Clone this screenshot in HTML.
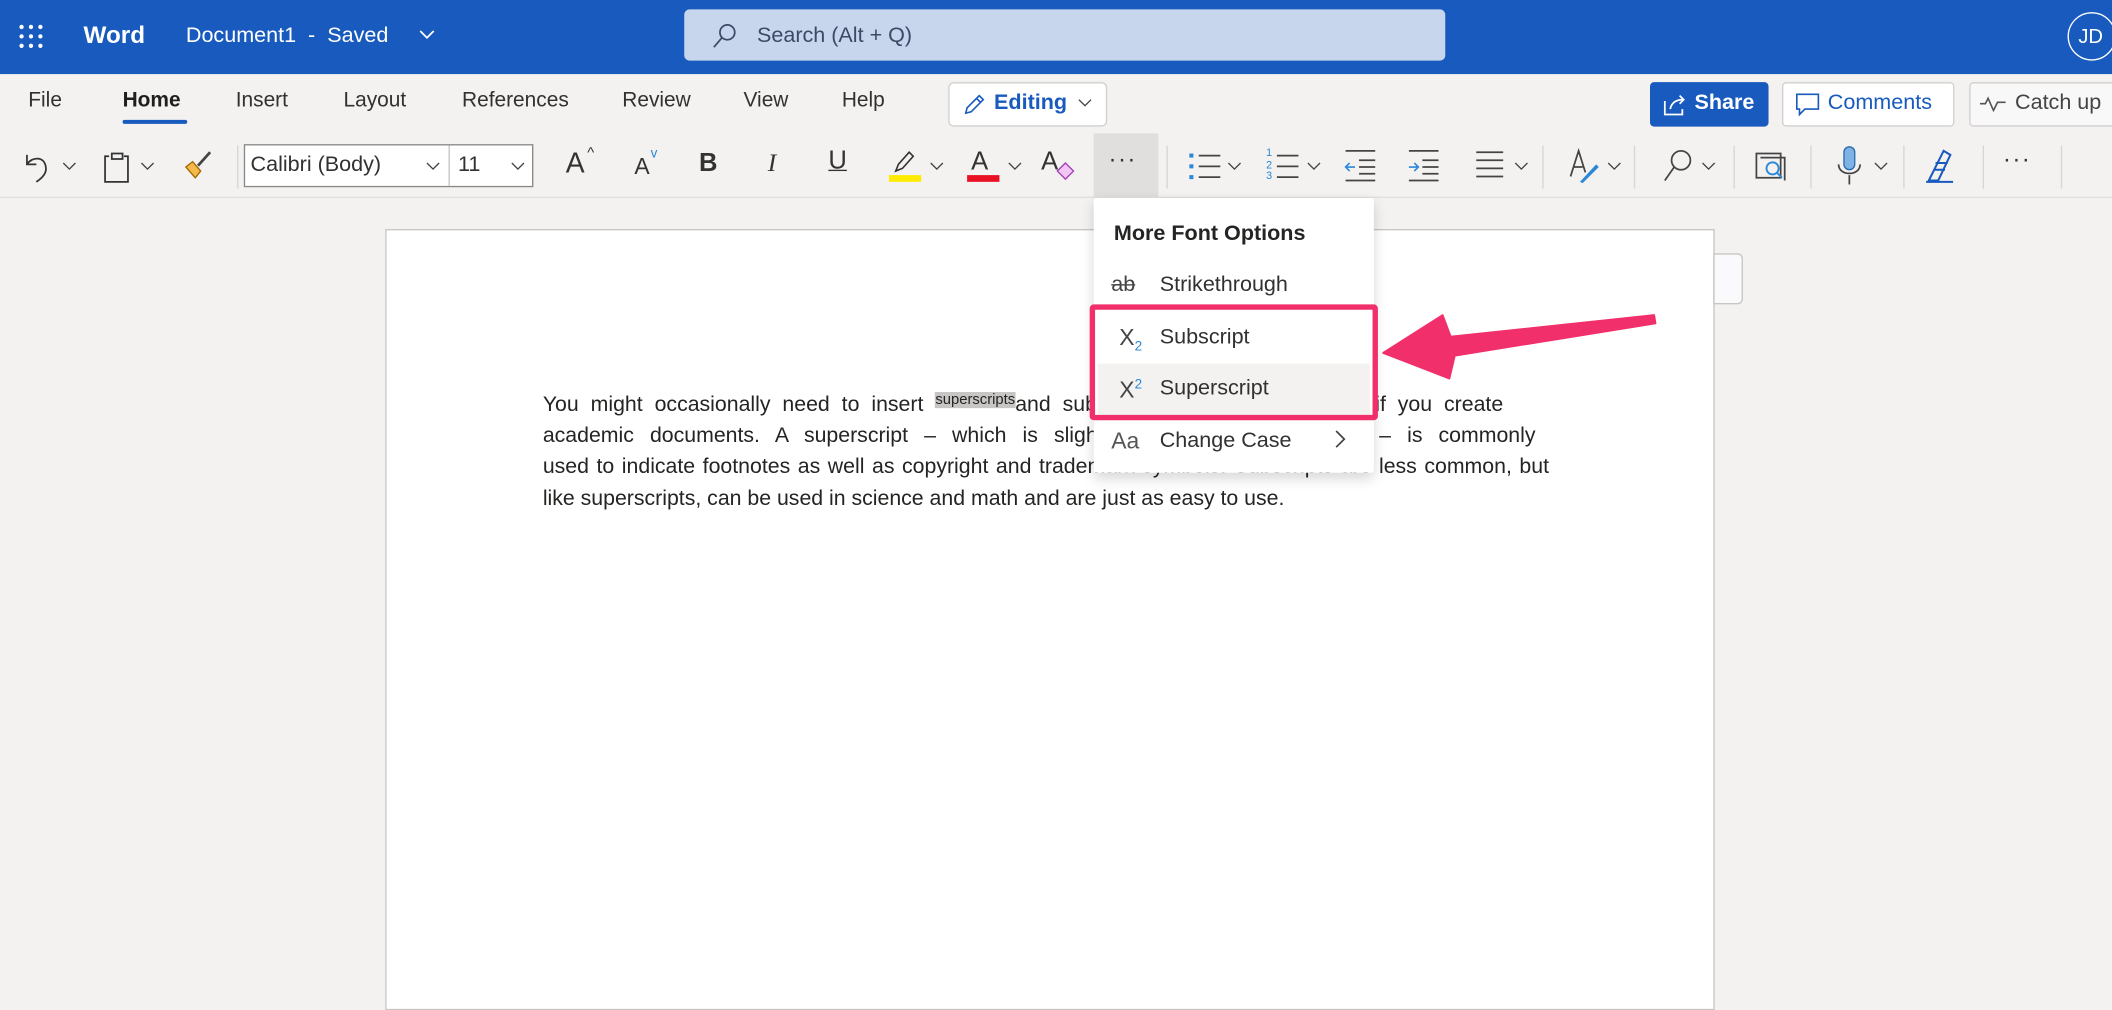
<!DOCTYPE html>
<html><head><meta charset="utf-8"><style>
*{margin:0;padding:0;box-sizing:border-box}
html,body{width:2112px;height:1000px;overflow:hidden;background:#f3f2f1}
#w{position:absolute;left:0;top:0;width:1568px;height:743px;transform:scale(1.34694);transform-origin:0 0;font-family:"Liberation Sans",sans-serif;color:#323130}
.a{position:absolute}
.hdr{left:0;top:0;width:1568px;height:55px;background:#185abd}
.t{font-size:15.5px;color:#323130;top:66px}
.ic{position:absolute}
.sep{position:absolute;top:108px;width:1px;height:32px;background:#d8d6d4}
.para div{white-space:nowrap;height:23.7px;font-size:15.8px;color:#252423;text-align:justify;text-align-last:justify}
.mi{position:absolute;left:861px;font-size:16px;color:#323130}
</style></head><body><div id="w">
<div class="a hdr"></div>
<svg class="ic" style="left:13px;top:17px" width="20" height="20" viewBox="0 0 20 20" fill="#fff"><circle cx="3" cy="3" r="1.6"/><circle cx="10" cy="3" r="1.6"/><circle cx="17" cy="3" r="1.6"/><circle cx="3" cy="10" r="1.6"/><circle cx="10" cy="10" r="1.6"/><circle cx="17" cy="10" r="1.6"/><circle cx="3" cy="17" r="1.6"/><circle cx="10" cy="17" r="1.6"/><circle cx="17" cy="17" r="1.6"/></svg>
<div class="a" style="left:62px;top:16px;color:#fff;font-weight:bold;font-size:18px">Word</div>
<div class="a" style="left:138px;top:18px;color:#fff;font-size:16px">Document1 &nbsp;- &nbsp;Saved</div>
<svg class="ic" style="left:311px;top:22px" width="12" height="8" viewBox="0 0 12 8"><path d="M1 1l5 5 5-5" stroke="#fff" fill="none" stroke-width="1.3"/></svg>
<div class="a" style="left:508px;top:7px;width:565px;height:38px;background:#c7d6ec;border-radius:4px"></div>
<svg class="ic" style="left:528px;top:17px" width="20" height="20" viewBox="0 0 20 20"><circle cx="12" cy="7" r="5.5" stroke="#3b4a66" fill="none" stroke-width="1.3"/><path d="M8 11L2 18" stroke="#3b4a66" stroke-width="1.3"/></svg>
<div class="a" style="left:562px;top:18px;font-size:16px;color:#3b4a66">Search (Alt + Q)</div>
<div class="a" style="left:1535px;top:9px;width:36px;height:36px;border:1.5px solid #fff;border-radius:50%;color:#fff;font-size:15px;padding:9px 0 0 7px">JD</div>

<div class="a t" style="left:21px">File</div>
<div class="a t" style="left:91px;font-weight:bold;color:#201f1e">Home</div>
<div class="a" style="left:91px;top:89px;width:48px;height:3px;background:#185abd;border-radius:2px"></div>
<div class="a t" style="left:175px">Insert</div>
<div class="a t" style="left:255px">Layout</div>
<div class="a t" style="left:343px">References</div>
<div class="a t" style="left:462px">Review</div>
<div class="a t" style="left:552px">View</div>
<div class="a t" style="left:625px">Help</div>
<div class="a" style="left:704px;top:61px;width:118px;height:33px;background:#fff;border:1px solid #d2d0ce;border-radius:4px"></div>
<svg class="ic" style="left:714px;top:68px" width="18" height="19" viewBox="0 0 18 19"><path d="M3 16l1-4L13 3l3 3-9 9z M11 5l3 3" stroke="#185abd" fill="none" stroke-width="1.2"/></svg>
<div class="a" style="left:738px;top:68px;font-size:16px;color:#185abd;font-weight:bold">Editing</div>
<svg class="ic" style="left:800px;top:73px" width="11" height="7" viewBox="0 0 11 7"><path d="M1 1l4.5 4.5L10 1" stroke="#444" fill="none"/></svg>
<div class="a" style="left:1225px;top:61px;width:88px;height:33px;background:#185abd;border-radius:3px"></div>
<svg class="ic" style="left:1234px;top:68px" width="20" height="19" viewBox="0 0 20 19"><path d="M2 7v10h13v-4 M6 13c1-5 5-7 10-7 M13 3l3 3-3 3" stroke="#fff" fill="none" stroke-width="1.3"/></svg>
<div class="a" style="left:1258px;top:68px;font-size:16px;color:#fff;font-weight:bold">Share</div>
<div class="a" style="left:1323px;top:61px;width:128px;height:33px;background:#fff;border:1px solid #d2d0ce;border-radius:3px"></div>
<svg class="ic" style="left:1333px;top:69px" width="18" height="18" viewBox="0 0 18 18"><path d="M1 1h16v11H7l-4 4v-4H1z" stroke="#185abd" fill="none" stroke-width="1.2"/></svg>
<div class="a" style="left:1357px;top:68px;font-size:16px;color:#185abd">Comments</div>
<div class="a" style="left:1462px;top:61px;width:110px;height:33px;background:#f8f8f8;border:1px solid #d2d0ce;border-radius:3px"></div>
<svg class="ic" style="left:1469px;top:71px" width="22" height="12" viewBox="0 0 22 12"><path d="M1 6h4l2-4 4 9 3-6h6" stroke="#555" fill="none" stroke-width="1.2"/></svg>
<div class="a" style="left:1496px;top:68px;font-size:16px;color:#444">Catch up</div>

<div class="a" style="left:0;top:146px;width:1568px;height:1px;background:#e1dfdd"></div>
<svg class="ic" style="left:16px;top:111px" width="26" height="26" viewBox="0 0 26 26"><path d="M4 4v7h7 M4 11c4-6 13-6 14 2 1 5-4 9-7 11" stroke="#333" fill="none" stroke-width="1.3"/></svg>
<svg class="ic" style="left:46px;top:120px" width="11" height="7" viewBox="0 0 11 7"><path d="M1 1l4.5 4.5L10 1" stroke="#444" fill="none"/></svg>
<svg class="ic" style="left:77px;top:112px" width="20" height="24" viewBox="0 0 20 24"><path d="M4 4H1v19h17V4h-3 M6 2h8v4H6z" stroke="#333" fill="none" stroke-width="1.3"/></svg>
<svg class="ic" style="left:104px;top:120px" width="11" height="7" viewBox="0 0 11 7"><path d="M1 1l4.5 4.5L10 1" stroke="#444" fill="none"/></svg>
<svg class="ic" style="left:135px;top:111px" width="24" height="24" viewBox="0 0 24 24"><path d="M3 13l7 8 4-5-6-7z" fill="#f5b84a" stroke="#a46a00"/><path d="M12 12l9-10" stroke="#444" stroke-width="2"/></svg>
<div class="sep" style="left:176px"></div>
<div class="a" style="left:181px;top:107px;width:215px;height:32px;background:#fff;border:1px solid #8a8886"></div>
<div class="a" style="left:333px;top:108px;width:1px;height:30px;background:#c8c6c4"></div>
<div class="a" style="left:186px;top:114px;font-size:16px">Calibri (Body)</div>
<svg class="ic" style="left:316px;top:120px" width="11" height="7" viewBox="0 0 11 7"><path d="M1 1l4.5 4.5L10 1" stroke="#444" fill="none"/></svg>
<div class="a" style="left:340px;top:114px;font-size:16px">11</div>
<svg class="ic" style="left:379px;top:120px" width="11" height="7" viewBox="0 0 11 7"><path d="M1 1l4.5 4.5L10 1" stroke="#444" fill="none"/></svg>
<div class="a" style="left:420px;top:110px;font-size:21px;color:#333">A</div><div class="a" style="left:436px;top:108px;font-size:11px;color:#333">^</div>
<div class="a" style="left:471px;top:114px;font-size:17px;color:#333">A</div><div class="a" style="left:483px;top:109px;font-size:10px;color:#2b88d8">v</div>
<div class="a" style="left:519px;top:111px;font-size:19px;font-weight:bold;color:#333">B</div>
<div class="a" style="left:570px;top:111px;font-size:19px;font-style:italic;font-family:'Liberation Serif',serif;color:#333">I</div>
<div class="a" style="left:615px;top:109px;font-size:19px;color:#333;text-decoration:underline">U</div>
<svg class="ic" style="left:660px;top:110px" width="24" height="26" viewBox="0 0 24 26"><path d="M5 17l2-5 8-9 3 3-8 9z" stroke="#333" fill="none" stroke-width="1.2"/><rect x="0" y="20" width="24" height="5" fill="#ffeb00"/></svg>
<svg class="ic" style="left:690px;top:120px" width="11" height="7" viewBox="0 0 11 7"><path d="M1 1l4.5 4.5L10 1" stroke="#444" fill="none"/></svg>
<div class="a" style="left:721px;top:110px;font-size:19px;color:#333">A</div>
<div class="a" style="left:718px;top:130px;width:24px;height:5px;background:#e81123"></div>
<svg class="ic" style="left:748px;top:120px" width="11" height="7" viewBox="0 0 11 7"><path d="M1 1l4.5 4.5L10 1" stroke="#444" fill="none"/></svg>
<div class="a" style="left:773px;top:110px;font-size:19px;color:#333">A</div>
<svg class="ic" style="left:784px;top:120px" width="14" height="14" viewBox="0 0 14 14"><path d="M7 1l6 6-6 6-6-6z" fill="#f1c6f4" stroke="#a53fb3"/></svg>
<div class="a" style="left:812px;top:99px;width:48px;height:48px;background:#e1dfdd"></div>
<div class="a" style="left:823px;top:108px;font-size:18px;color:#333;letter-spacing:1px">···</div>
<div class="sep" style="left:866px"></div>
<svg class="ic" style="left:882px;top:111px" width="26" height="24" viewBox="0 0 26 24"><rect x="1" y="3" width="3" height="3" fill="#2b88d8"/><rect x="1" y="11" width="3" height="3" fill="#2b88d8"/><rect x="1" y="19" width="3" height="3" fill="#2b88d8"/><path d="M8 4.5h16M8 12.5h16M8 20.5h16" stroke="#444" stroke-width="1.3"/></svg>
<svg class="ic" style="left:911px;top:120px" width="11" height="7" viewBox="0 0 11 7"><path d="M1 1l4.5 4.5L10 1" stroke="#444" fill="none"/></svg>
<div class="a" style="left:940px;top:110px;font-size:8px;color:#2b88d8;line-height:8.5px">1<br>2<br>3</div>
<svg class="ic" style="left:946px;top:111px" width="20" height="24" viewBox="0 0 20 24"><path d="M2 4.5h16M2 12.5h16M2 20.5h16" stroke="#444" stroke-width="1.3"/></svg>
<svg class="ic" style="left:970px;top:120px" width="11" height="7" viewBox="0 0 11 7"><path d="M1 1l4.5 4.5L10 1" stroke="#444" fill="none"/></svg>
<svg class="ic" style="left:997px;top:110px" width="26" height="26" viewBox="0 0 26 26"><path d="M2 2h22M12 9h12M12 14h12M12 19h12M2 24h22" stroke="#444" stroke-width="1.3"/><path d="M9 14H2m3-3l-3 3 3 3" stroke="#2b88d8" fill="none" stroke-width="1.2"/></svg>
<svg class="ic" style="left:1044px;top:110px" width="26" height="26" viewBox="0 0 26 26"><path d="M2 2h22M12 9h12M12 14h12M12 19h12M2 24h22" stroke="#444" stroke-width="1.3"/><path d="M2 14h7m-3-3l3 3-3 3" stroke="#2b88d8" fill="none" stroke-width="1.2"/></svg>
<svg class="ic" style="left:1094px;top:110px" width="26" height="26" viewBox="0 0 26 26"><path d="M2 3h20M2 9h20M2 15h20M2 21h20" stroke="#444" stroke-width="1.3"/></svg>
<svg class="ic" style="left:1124px;top:120px" width="11" height="7" viewBox="0 0 11 7"><path d="M1 1l4.5 4.5L10 1" stroke="#444" fill="none"/></svg>
<div class="sep" style="left:1145px"></div>
<svg class="ic" style="left:1163px;top:109px" width="26" height="28" viewBox="0 0 26 28"><path d="M3 22L9 3l5 16 M5 15h7" stroke="#444" fill="none" stroke-width="1.3"/><path d="M10 26l12-13 2 2-12 12z" fill="#2b88d8"/></svg>
<svg class="ic" style="left:1193px;top:120px" width="11" height="7" viewBox="0 0 11 7"><path d="M1 1l4.5 4.5L10 1" stroke="#444" fill="none"/></svg>
<div class="sep" style="left:1213px"></div>
<svg class="ic" style="left:1234px;top:110px" width="24" height="26" viewBox="0 0 24 26"><circle cx="14" cy="9" r="7" stroke="#444" fill="none" stroke-width="1.3"/><path d="M9 14L2 24" stroke="#444" stroke-width="1.3"/></svg>
<svg class="ic" style="left:1263px;top:120px" width="11" height="7" viewBox="0 0 11 7"><path d="M1 1l4.5 4.5L10 1" stroke="#444" fill="none"/></svg>
<div class="sep" style="left:1287px"></div>
<svg class="ic" style="left:1302px;top:110px" width="26" height="26" viewBox="0 0 26 26"><path d="M2 4h18v18H2z M5 7h18v17" stroke="#444" fill="none" stroke-width="1.3"/><circle cx="14" cy="15" r="4.5" stroke="#2b88d8" fill="none" stroke-width="1.4"/><path d="M17 18l4 4" stroke="#2b88d8" stroke-width="1.4"/></svg>
<div class="sep" style="left:1344px"></div>
<svg class="ic" style="left:1363px;top:108px" width="20" height="30" viewBox="0 0 20 30"><rect x="6" y="1" width="8" height="17" rx="4" fill="#7fb2e5" stroke="#2b6cb0"/><path d="M2 14c0 9 16 9 16 0 M10 22v7" stroke="#444" fill="none" stroke-width="1.3"/></svg>
<svg class="ic" style="left:1391px;top:120px" width="11" height="7" viewBox="0 0 11 7"><path d="M1 1l4.5 4.5L10 1" stroke="#444" fill="none"/></svg>
<div class="sep" style="left:1413px"></div>
<svg class="ic" style="left:1428px;top:110px" width="24" height="26" viewBox="0 0 24 26"><path d="M4 24L15 2l5 3-9 19z M2 25h20 M9 11h9M8 16h8" stroke="#185abd" fill="none" stroke-width="1.5"/></svg>
<div class="sep" style="left:1472px"></div>
<div class="a" style="left:1487px;top:108px;font-size:18px;color:#333;letter-spacing:1px">···</div>
<div class="sep" style="left:1530px"></div>

<div class="a" style="left:286px;top:170px;width:987px;height:580px;background:#fff;border:1px solid #c8c6c4"></div>
<div class="a" style="left:1272px;top:188px;width:22px;height:38px;background:#faf9fb;border:1px solid #c8c6c4;border-radius:0 4px 4px 0"></div>
<div class="a para" style="left:403px;top:291px">
<div style="width:713px">You might occasionally need to insert <span style="background:#c8c6c4;font-size:11px;vertical-align:5px">superscripts</span>and subscripts into your document if you create</div>
<div style="width:737px">academic documents. A superscript – which is slightly raised above the text – is commonly</div>
<div style="width:747px">used to indicate footnotes as well as copyright and trademark symbols. Subscripts are less common, but</div>
<div style="text-align-last:left">like superscripts, can be used in science and math and are just as easy to use.</div>
</div>

<div class="a" style="left:812px;top:147px;width:208px;height:204px;background:#fff;box-shadow:0 4px 10px rgba(0,0,0,.16);border-radius:2px"></div>
<div class="a" style="left:827px;top:165px;font-size:16px;font-weight:bold;color:#252423">More Font Options</div>
<div class="a" style="left:825px;top:203px;font-size:16px;color:#444;text-decoration:line-through">ab</div>
<div class="mi" style="top:203px">Strikethrough</div>
<div class="a" style="left:815px;top:270px;width:202px;height:38px;background:#f3f2f1"></div>
<div class="a" style="left:831px;top:241px;font-size:17px;color:#444">X<sub style="font-size:10px;color:#2b88d8">2</sub></div>
<div class="mi" style="top:242px">Subscript</div>
<div class="a" style="left:831px;top:280px;font-size:17px;color:#444">X<sup style="font-size:10px;color:#2b88d8">2</sup></div>
<div class="mi" style="top:280px">Superscript</div>
<div class="a" style="left:825px;top:318px;font-size:17px;color:#555">Aa</div>
<div class="mi" style="top:319px">Change Case</div>
<svg class="ic" style="left:990px;top:318px" width="10" height="16" viewBox="0 0 10 16"><path d="M2 2l6 6-6 6" stroke="#444" fill="none" stroke-width="1.3"/></svg>
<div class="a" style="left:809px;top:226px;width:214px;height:86px;border:4px solid #f1306b;border-radius:3px"></div>
<svg class="ic" style="left:0;top:0" width="1568" height="743" viewBox="0 0 1568 743"><path d="M1027 262L1071 234L1077 250L1228 234L1229 240L1080 264L1076 281Z" fill="#f1306b" stroke="#f1306b" stroke-width="1.5" stroke-linejoin="round"/></svg>
</div></body></html>
